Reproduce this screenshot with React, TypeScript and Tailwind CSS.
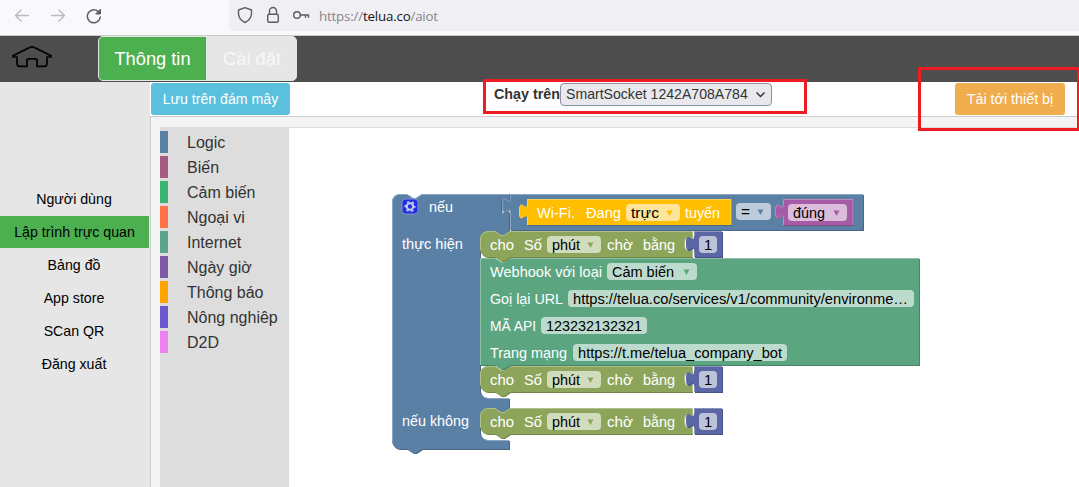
import React from "react";

const SANS = '"Liberation Sans", Arial, sans-serif';

const categories = [
  ["Logic", "bg-[#5b80a5]"],
  ["Biến", "bg-[#a55b80]"],
  ["Cảm biến", "bg-[#3cb371]"],
  ["Ngoại vi", "bg-[#ff7247]"],
  ["Internet", "bg-[#5ba58c]"],
  ["Ngày giờ", "bg-[#805ba5]"],
  ["Thông báo", "bg-[#ffa500]"],
  ["Nông nghiêp", "bg-[#6a5acd]"],
  ["D2D", "bg-[#ee82ee]"],
];

const menu = ["Người dùng", "Lập trình trực quan", "Bảng đồ", "App store", "SCan QR", "Đăng xuất"];

function Shape({ d, fill, dark, light, edge }: { d: string; fill: string; dark: string; light: string; edge?: string }) {
  return (
    <>
      <path d={d} fill={dark} transform="translate(1,1)" />
      <path d={d} fill={fill} />
      {edge && <path d={edge} fill="none" stroke={light} strokeWidth="1" />}
    </>
  );
}

function T({ x, y, w, dark, children }: { x: number; y: number; w: number; dark?: boolean; children: string }) {
  return (
    <text x={x} y={y} textLength={w} lengthAdjust="spacingAndGlyphs" fontSize="14.67" fill={dark ? "#000" : "#fff"}>
      {children}
    </text>
  );
}

function Field({ x, y, w, tx, tw, text, arrow }: { x: number; y: number; w: number; tx: number; tw: number; text: string; arrow?: string }) {
  return (
    <>
      <rect x={x} y={y} width={w} height="17" rx="4" fill="#fff" fillOpacity="0.6" />
      <T x={tx} y={y + 14} w={tw} dark>{text}</T>
      {arrow && <path d={`M${x + w - 13.5} ${y + 6.5}h6l-3 5.500z`} fill={arrow} />}
    </>
  );
}

function WaitBlock({ y }: { y: number }) {
  const d = `M480 ${y + 8}a8 8 0 0 1 8-8h7l6 4h3l6-4H692v5c0 10-8-8-8 7.5s8-2.5 8 7.5v6H510l-6 4h-3l-6-4h-7a8 8 0 0 1-8-8z`;
  const n = `M694 ${y}h28v26h-28v-6c0-10-8 8-8-7.5s8 2.5 8-7.5z`;
  return (
    <g>
      <Shape d={d} fill="#8da55b" dark="#718449" light="#afc08c" edge={`M480.5 ${y + 19}v-11a7.5 7.5 0 0 1 7.5-7.5h7l6 4h3l6-4H692.5v4.5c0 10-8-8-8 7.5s8-2.5 8 7.5v6`} />
      <T x={490} y={y + 19} w={24}>cho</T>
      <T x={524} y={y + 19} w={18}>Số</T>
      <Field x={547} y={y + 5} w={54} tx={552} tw={28} text="phút" arrow="#8da55b" />
      <T x={607} y={y + 19} w={26}>chờ</T>
      <T x={643} y={y + 19} w={32}>bằng</T>
      <Shape d={n} fill="#5b67a5" dark="#495284" light="#8c95c0" edge={`M694.5 ${y + 26}v-6M694.5 ${y + 5}v-4.5H722`} />
      <Field x={699} y={y + 5} w={18} tx={704} tw={8.2} text="1" />
    </g>
  );
}

function Canvas() {
  const root =
    "M392 202a8 8 0 0 1 8-8h7l6 4h3l6-4H509v5c0 10-8-8-8 7.5s8-2.5 8 7.5V231l-5 4h-3l-6-4h-7a8 8 0 0 0-8 8v151a8 8 0 0 0 8 8H509v10l-5 4h-3l-6-4h-7a8 8 0 0 0-8 8v16a8 8 0 0 0 8 8H509v9H422l-6 4h-3l-6-4h-7a8 8 0 0 1-8-8z";
  return (
    <svg className="block" width="790" height="359" viewBox="289 128 790 359" fontFamily={SANS}>
      <Shape d={root} fill="#5b80a5" dark="#496684" light="#8ca6c0" edge="M392.500 441V202a7.500 7.500 0 0 1 7.500-7.500h7l6 4h3l6-4h87.500M482 395q2 3.500 6 3.500h21M482 437q2 3.500 6 3.500h21" />
      <Shape d="M509 194H863V230H510v-17c0-10-8 8-8-7.500s8 2.500 8-7.500z" fill="#5b80a5" dark="#496684" light="#8ca6c0" edge="M510.500 230v-17c0-10-8 8-8-7.500s8 2.500 8-7.500v-3.500H863" />
      <rect x="402" y="199" width="16" height="15" rx="3.500" fill="#252ee1" stroke="#8094d2" />
      <g transform="translate(410 206.500)" stroke="#c2ccee" fill="none">
        <circle r="3.200" strokeWidth="2" />
        <circle r="4.800" strokeWidth="1.500" strokeDasharray="2.500 2.526" strokeDashoffset="1.250" />
      </g>
      <T x={429} y={212} w={24}>nếu</T>
      <T x={402} y={249} w={61}>thực hiện</T>
      <T x={402} y={426} w={67}>nếu không</T>

      <Shape d="M527 199H731V225H527v-6c0-10-8 8-8-7.500s8 2.500 8-7.500z" fill="#ffbf00" dark="#496684" light="#ffd24d" edge="M527.500 225v-6c0-10-8 8-8-7.500s8 2.500 8-7.500v-4.500H731V225" />
      <T x={537} y={218} w={38}>Wi-Fi.</T>
      <T x={586} y={218} w={35}>Đang</T>
      <Field x={626} y={204} w={54} tx={631} tw={28} text="trực" arrow="#ffbf00" />
      <T x={685} y={218} w={35}>tuyến</T>
      <Field x={736} y={203} w={35} tx={741} tw={9} text="=" arrow="#5b80a5" />
      <Shape d="M783 199H853V225H783v-6c0-10-8 8-8-7.500s8 2.500 8-7.500z" fill="#a55ba5" dark="#844984" light="#c08cc0" edge="M783.500 225v-6c0-10-8 8-8-7.500s8 2.500 8-7.500v-4.500H853V225" />
      <Field x={788} y={204} w={59} tx={793} tw={32} text="đúng" arrow="#a55ba5" />

      <WaitBlock y={366} />
      <Shape d="M480 258h15l6 4h3l6-4H919V365H510l-6 4h-3l-6-4H480z" fill="#5ba580" dark="#498466" light="#8cc0a6" edge="M480.500 365V258.500h14.500l6 4h3l6-4H919" />
      <WaitBlock y={231} />
      <T x={490} y={277} w={112}>Webhook với loại</T>
      <Field x={607} y={263} w={90} tx={612} tw={62} text="Cảm biến" arrow="#5ba580" />
      <T x={490} y={304} w={73}>Goị lại URL</T>
      <Field x={568} y={290} w={346} tx={573} tw={335} text="https://telua.co/services/v1/community/environme…" />
      <T x={490} y={331} w={46}>MÃ API</T>
      <Field x={541} y={317} w={106} tx={546} tw={96} text="123232132321" />
      <T x={490} y={358} w={77}>Trang mạng</T>
      <Field x={573} y={344} w={214} tx={578} tw={204} text="https://t.me/telua_company_bot" />
      <WaitBlock y={408} />
    </svg>
  );
}

export default function App() {
  return (
    <div className="relative h-[487px] w-[1079px] overflow-hidden bg-white text-[#333]" style={{ fontFamily: SANS }}>
      <header className="flex h-9 border-b border-[#ccc] bg-[#f9f9fb]">
        <svg className="shrink-0" width="229" height="35" fill="none" stroke="#b9b9be" strokeWidth="1.300" strokeLinecap="round" strokeLinejoin="round">
          <path d="M28.500 15.500h-13m5.500-5.500-5.500 5.500 5.500 5.500M51.500 15.500h13M59 10l5.500 5.500L59 21" />
          <path d="M98 11.300A6.500 6.500 0 1 0 100.300 17" stroke="#5b5b66" strokeWidth="1.500" />
          <path d="M100.500 9.500v4.500h-4.500z" fill="#5b5b66" stroke="#5b5b66" strokeWidth="1" />
        </svg>
        <div className="flex h-[31px] flex-1 items-center rounded-bl bg-[#f0f0f4]">
          <svg className="shrink-0" width="90" height="31" fill="none" stroke="#5b5b66" strokeWidth="1.400" strokeLinejoin="round" strokeLinecap="round">
            <path d="M16 7.700 22.500 10v3.500c0 4-2.500 7-6.500 9-4-2-6.500-5-6.500-9V10z" />
            <rect x="38.700" y="14.200" width="10.600" height="8" rx="1.500" />
            <path d="M40.500 14v-3a3.500 3.500 0 0 1 7 0v3" />
            <circle cx="68" cy="15" r="3.300" />
            <path d="M71.500 15H79.500v2.300M76.500 15v2.300" />
          </svg>
          <div className="whitespace-nowrap pt-[2px] text-[13.3px] leading-none tracking-[-0.18px] text-[#84848c]" style={{ fontFamily: '"Open Sans", sans-serif' }}>
            https://<span className="text-[#15141a]">telua.co</span>/aiot
          </div>
        </div>
      </header>

      <nav className="flex h-[46px] bg-[#4d4d4d]">
        <svg className="shrink-0" width="98" height="46" fill="none" stroke="#000" strokeWidth="1.700" strokeLinejoin="round">
          <path d="M32 10.800 28.500 12 13 19.800V21h4v6.500q0 2.800 2.500 2.800h7.500V24q0-1.200 1.200-1.200h7.600Q37 22.800 37 24v6.300h7.500q2.500 0 2.500-2.800V21h4v-1.200L35.500 12z" />
        </svg>
        <div className="flex h-[45px] w-[199px] overflow-hidden rounded-[5px] border border-[#e6e6e6] bg-[#e6e6e6] text-[18.3px] text-white">
          <div className="flex w-[107px] items-center justify-center bg-[#4caf50]">Thông tin</div>
          <div className="flex flex-1 items-center justify-center pl-[2px] text-[#f8f8f8]">Cài đặt</div>
        </div>
      </nav>

      <div className="flex h-[405px]">
        <aside className="w-[150px] shrink-0 bg-[#e6e6e6] pt-[101px] text-center text-[14.2px] text-black">
          {menu.map((item, i) => (
            <div key={item} className={i === 1 ? "mb-px flex h-[32px] w-[149px] items-center justify-center bg-[#4caf50] pt-px" : "flex h-[33px] w-[148px] items-center justify-center"}>
              {item}
            </div>
          ))}
        </aside>
        <main className="flex min-w-0 flex-1 flex-col">
          <div className="flex h-[34px] items-start pl-px pt-px">
            <button className="h-8 w-[139px] rounded-[3px] bg-[#5bc0de] pt-px text-[14.15px] text-white">Lưu trên đám mây</button>
            <div className="ml-[204px] w-[66px] shrink-0 whitespace-nowrap text-[14.3px] font-bold leading-[22px]">Chạy trên</div>
            <div className="flex h-[23px] w-[212px] shrink-0 items-center justify-between rounded border border-[#8f8f9d] bg-[#e9e9ed] pl-[5px] pr-[6px] text-[14.1px]">
              <span>SmartSocket 1242A708A784</span>
              <svg width="9" height="9" viewBox="0 0 9 9" fill="none" stroke="#333" strokeWidth="1.500"><path d="m.5 2.500 4 4 4-4" /></svg>
            </div>
            <button className="ml-[183px] h-8 w-[110px] rounded-[3px] bg-[#f0ad4e] pt-px text-[14.3px] text-white">Tải tới thiết bị</button>
          </div>
          <div className="flex h-[371px] border-l border-t border-[#ccc] bg-[#f4f4f4] pl-[9px] pt-[10px]">
            <div className="w-[129px] shrink-0 bg-[#ddd] pt-1">
              {categories.map(([name, color]) => (
                <div key={name} className="mb-[3px] flex h-[22px] items-center">
                  <span className={`h-[22px] w-2 ${color}`} />
                  <span className="ml-[19px] whitespace-nowrap pt-[2px] text-[16px] leading-[22px]">{name}</span>
                </div>
              ))}
            </div>
            <div className="flex-1 border-t border-[#ddd] bg-white"><Canvas /></div>
          </div>
        </main>
      </div>
      <div className="pointer-events-none absolute left-[483px] top-[79px] h-[35px] w-[324px] border-[3px] border-[#ed1c24]" />
      <div className="pointer-events-none absolute left-[918px] top-[67px] h-[64px] w-[162px] border-[3px] border-[#ed1c24]" />
    </div>
  );
}
